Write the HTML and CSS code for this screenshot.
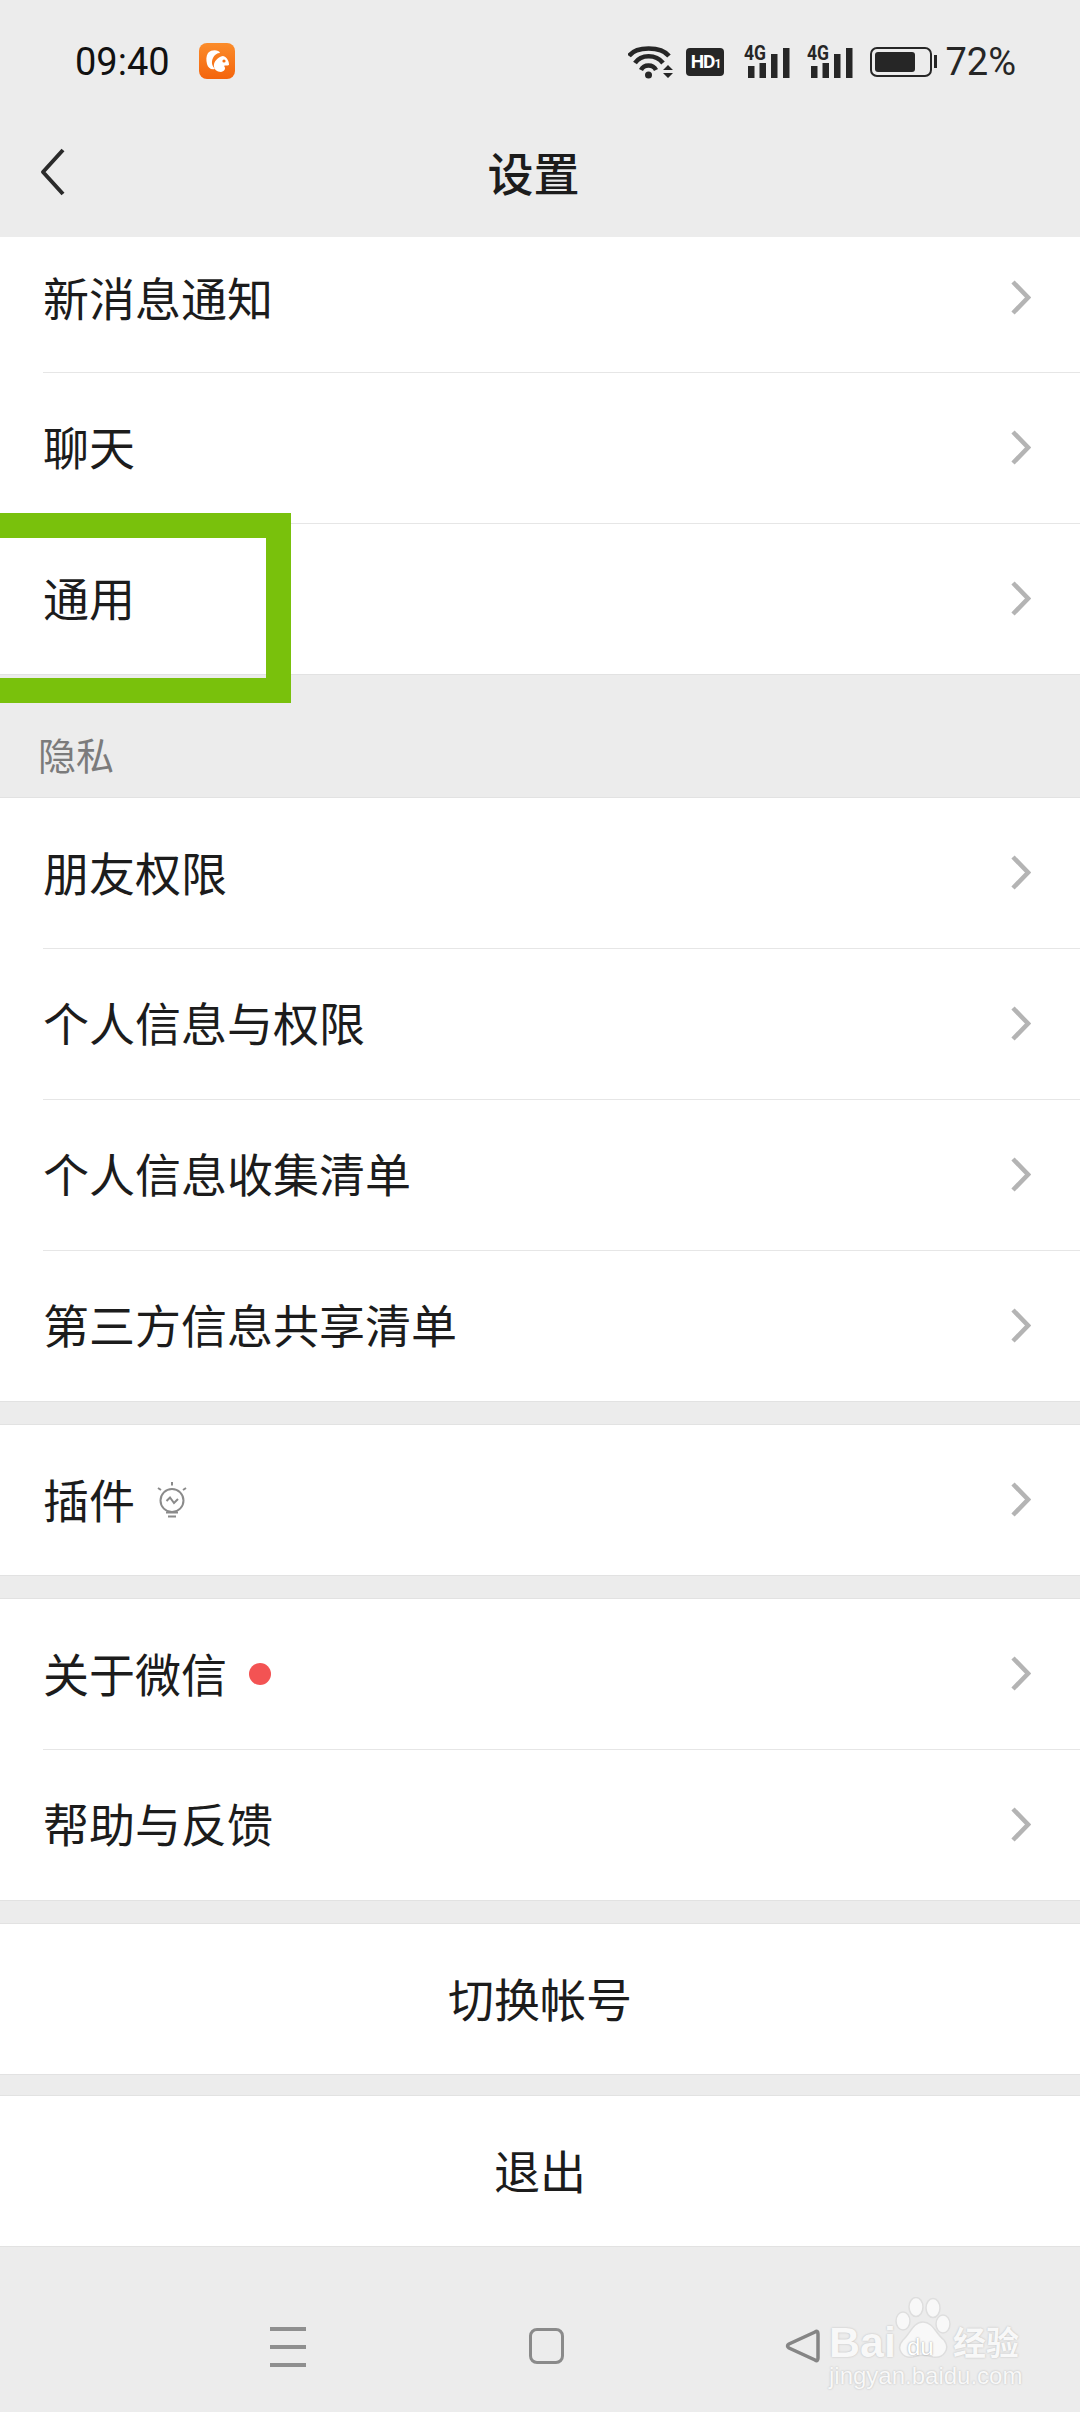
FILE: index.html
```html
<!DOCTYPE html>
<html>
  <head>
    <meta charset="utf-8">
    <title>设置</title>
    <link rel="stylesheet" href="styles.css">
  </head>
  <body>
    <svg class="sprites" width="0" height="0">
      <symbol id="chevron" viewBox="0 0 20 36">
        <path d="M2 2 L17 17.500 L2 33" fill="none" stroke="#b4b4b4" stroke-width="4.500"/>
      </symbol>
    </svg>

    <header class="status">
      <span class="clock">09:40</span>
      <svg class="uc-icon" width="36" height="36" viewBox="0 0 36 36">
        <defs>
          <linearGradient id="ucfill" x1="0" y1="0" x2="0" y2="1">
            <stop offset="0" stop-color="#fb8c2a"/>
            <stop offset="1" stop-color="#f4640c"/>
          </linearGradient>
        </defs>
        <rect width="36" height="36" rx="8" fill="url(#ucfill)"/>
        <path d="M9 10 C13 6 20 7 21 10 C18 10 15 12 14 15 C12 19 13 23 16 26 C12 27 9 25 8 21 C7 17 7 13 9 10 Z" fill="#fff"/>
        <path d="M15 21 C16 17 21 13 24 13 C28 14 30 18 30 22 C28 23 26 22 25 23 C27 25 26 28 22 29 C18 29 14 26 15 21 Z" fill="#fff"/>
        <circle cx="25" cy="18" r="1.600" fill="#f4700f"/>
      </svg>
      <div class="status-right">
        <svg class="wifi" width="46" height="34" viewBox="0 0 46 34">
          <g fill="none" stroke="#262626" stroke-width="4.500">
            <path d="M1 11 C8 1 33 1 41 11"/>
            <path d="M7 18 C13 9 28 9 35 18"/>
            <path d="M13 25 C16 19 25 19 28 25"/>
          </g>
          <circle cx="20.500" cy="30" r="3.500" fill="#262626"/>
          <path d="M35 25 L40 20 L45 25 Z M35 28 L45 28 L40 33 Z" fill="#262626"/>
        </svg>
        <span class="hd">HD<small>1</small></span>
        <svg class="signal" width="46" height="38" viewBox="0 -5 46 38">
          <text x="0" y="14" class="sig-text" textLength="22" lengthAdjust="spacingAndGlyphs">4G</text>
          <rect x="4" y="20" width="6.500" height="12"/>
          <rect x="15.500" y="17" width="6.500" height="15"/>
          <rect x="27" y="8" width="6.500" height="24"/>
          <rect x="39" y="2" width="6.500" height="30"/>
        </svg>
        <svg class="signal" width="46" height="38" viewBox="0 -5 46 38">
          <text x="0" y="14" class="sig-text" textLength="22" lengthAdjust="spacingAndGlyphs">4G</text>
          <rect x="4" y="20" width="6.500" height="12"/>
          <rect x="15.500" y="17" width="6.500" height="15"/>
          <rect x="27" y="8" width="6.500" height="24"/>
          <rect x="39" y="2" width="6.500" height="30"/>
        </svg>
        <span class="battery"><span class="battery-fill"></span></span>
        <span class="percent">72%</span>
      </div>
    </header>

    <nav class="navbar">
      <svg class="back" width="28" height="48" viewBox="0 0 28 48">
        <path d="M24 2 L4 24 L24 46" fill="none" stroke="#2a2a2a" stroke-width="4" stroke-linejoin="round"/>
      </svg>
      <h1>设置</h1>
    </nav>

    <section class="group">
      <div class="row first"><span>新消息通知</span><svg class="chev"><use href="#chevron"/></svg></div>
      <div class="row"><span>聊天</span><svg class="chev"><use href="#chevron"/></svg></div>
      <div class="row"><span>通用</span><svg class="chev"><use href="#chevron"/></svg></div>
    </section>

    <div class="caption">隐私</div>

    <section class="group">
      <div class="row"><span>朋友权限</span><svg class="chev"><use href="#chevron"/></svg></div>
      <div class="row"><span>个人信息与权限</span><svg class="chev"><use href="#chevron"/></svg></div>
      <div class="row"><span>个人信息收集清单</span><svg class="chev"><use href="#chevron"/></svg></div>
      <div class="row"><span>第三方信息共享清单</span><svg class="chev"><use href="#chevron"/></svg></div>
    </section>

    <section class="group spaced">
      <div class="row">
        <span>插件</span>
        <svg class="bulb" width="30" height="36" viewBox="0 0 30 36">
          <g fill="none" stroke="#8a8a8a" stroke-width="2">
            <circle cx="15" cy="18.500" r="11.500"/>
            <path d="M9.500 19 L13 15.500 L17 21 L21 17"/>
            <path d="M15 0 L15 3.500 M1 6 L4 8 M29 6 L26 8"/>
            <path d="M9 30.500 L21 30.500 M11 34.500 L19 34.500"/>
          </g>
        </svg>
        <svg class="chev"><use href="#chevron"/></svg>
      </div>
    </section>

    <section class="group spaced">
      <div class="row"><span>关于微信</span><i class="dot"></i><svg class="chev"><use href="#chevron"/></svg></div>
      <div class="row"><span>帮助与反馈</span><svg class="chev"><use href="#chevron"/></svg></div>
    </section>

    <section class="group spaced"><div class="row center"><span>切换帐号</span></div></section>
    <section class="group spaced tight"><div class="row center"><span>退出</span></div></section>

    <footer class="sysnav">
      <span class="menu-btn"><i></i><i></i><i></i></span>
      <span class="home-btn"></span>
      <svg class="back-btn" width="36" height="36" viewBox="0 0 36 36">
        <path d="M30 4 Q33 2 33 6 L33 30 Q33 34 30 32 L4 20 Q1 18 4 16 Z" fill="none" stroke="#858585" stroke-width="3.500"/>
      </svg>
    </footer>

    <!-- annotation + watermark sit on top of the screenshot -->
    <div class="highlight"></div>
    <div class="watermark">
      <svg class="paw" width="56" height="62" viewBox="0 0 56 62">
        <g fill="#f8f8f8" stroke="#dedede" stroke-width="1.500">
          <ellipse cx="21" cy="10" rx="7" ry="9.500"/>
          <ellipse cx="38" cy="11" rx="7" ry="9.500"/>
          <ellipse cx="8" cy="24" rx="7" ry="9"/>
          <ellipse cx="48" cy="27" rx="7" ry="9"/>
          <path d="M28 25 C38 25 41 37 49 43 C56 52 48 62 38 60 C32 58 24 58 18 60 C8 62 0 52 8 43 C15 37 18 25 28 25 Z"/>
        </g>
      </svg>
      <span class="wm-brand">Bai</span>
      <span class="wm-du">du</span>
      <span class="wm-cn">经验</span>
      <span class="wm-url">jingyan.baidu.com</span>
    </div>
  </body>
</html>
```

FILE: styles.css
```css
* {
  margin: 0;
  padding: 0;
  box-sizing: border-box;
}
body {
  width: 1080px;
  height: 2412px;
  overflow: hidden;
  position: relative;
  background-color: #ececec;
  color: #1c1c1c;
  font-family: "Noto Sans CJK SC", "Noto Sans", sans-serif;
  font-size: 46px;
}
.sprites {
  position: absolute;
}
.sig-text {
  font-family: "Roboto", sans-serif;
  font-size: 20px;
  font-weight: 700;
  fill: #262626;
}

/* status bar */
.status {
  height: 124px;
  display: flex;
  align-items: center;
  padding-left: 75px;
  padding-right: 64px;
}
.clock {
  font-family: "Roboto", sans-serif;
  font-size: 38px;
  color: #111;
  width: 124px;
}
.uc-icon {
  margin-top: -2px;
}
.status-right {
  margin-left: auto;
  display: flex;
  align-items: center;
  gap: 17px;
}
.wifi {
  margin-right: -5px;
}
.signal {
  fill: #262626;
  margin-top: -5px;
}
.hd {
  width: 38px;
  height: 28px;
  border-radius: 4px;
  background-color: #262626;
  color: #fff;
  font-family: "Roboto", sans-serif;
  font-weight: 700;
  font-size: 19px;
  line-height: 28px;
  text-align: center;
  letter-spacing: -1px;
  margin-right: 3px;
}
.hd small {
  font-size: 12px;
}
.battery {
  display: block;
  position: relative;
  width: 62px;
  height: 30px;
  border: 2.500px solid #262626;
  border-radius: 7px;
  padding: 3px;
  margin-right: 2px;
}
.battery::after {
  content: "";
  position: absolute;
  right: -7px;
  top: 6px;
  width: 3px;
  height: 13px;
  background-color: #262626;
}
.battery-fill {
  display: block;
  width: 40px;
  height: 100%;
  border-radius: 3px;
  background-color: #262626;
}
.percent {
  font-family: "Roboto", sans-serif;
  font-size: 38px;
  color: #262626;
  margin-left: -6px;
}

/* title */
.navbar {
  height: 113px;
  position: relative;
  display: flex;
  align-items: center;
  justify-content: center;
  padding-bottom: 19px;
}
.navbar h1 {
  font-size: 46px;
  font-weight: 500;
  margin-left: -13px;
}
.back {
  position: absolute;
  left: 39px;
  top: 24px;
}

/* list */
.group {
  background-color: #fff;
  border-bottom: 1px solid #e2e2e2;
}
.group.spaced {
  margin-top: 22px;
  border-top: 1px solid #e2e2e2;
}
.group.spaced.tight {
  margin-top: 20px;
}
.row {
  height: 151px;
  display: flex;
  align-items: center;
  padding-left: 43px;
  position: relative;
}
.row > span {
  padding-bottom: 5px;
}
.row + .row::before {
  content: "";
  position: absolute;
  left: 43px;
  right: 0;
  top: 0;
  height: 1px;
  background-color: #e6e6e6;
}
.row.first {
  height: 135px;
  padding-bottom: 13px;
}
.group.spaced .row:first-child,
.caption + .group .row:first-child {
  height: 150px;
}
.row.center {
  justify-content: center;
  padding-left: 0;
}
.chev {
  width: 20px;
  height: 36px;
  margin-left: auto;
  margin-right: 49px;
}
.bulb {
  margin-left: 22px;
}
.dot {
  width: 22px;
  height: 22px;
  border-radius: 50%;
  margin-left: 22px;
  background-color: #f35353;
}
.caption {
  height: 123px;
  padding-left: 38px;
  padding-top: 52px;
  font-size: 38px;
  line-height: 54px;
  color: #7b7b7b;
  border-bottom: 1px solid #e2e2e2;
}

/* system buttons */
.sysnav {
  height: 166px;
  position: relative;
}
.menu-btn {
  position: absolute;
  left: 270px;
  top: 80px;
  width: 36px;
  display: flex;
  flex-direction: column;
  gap: 14px;
}
.menu-btn i {
  height: 4px;
  background-color: #8f8f8f;
}
.home-btn {
  position: absolute;
  left: 529px;
  top: 81px;
  width: 35px;
  height: 36px;
  border: 3px solid #8a8a8a;
  border-radius: 8px;
}
.back-btn {
  position: absolute;
  left: 785px;
  top: 81px;
}

/* overlays */
.highlight {
  position: absolute;
  left: -25px;
  top: 513px;
  width: 316px;
  height: 190px;
  border: 25px solid #79c10c;
}
.watermark {
  position: absolute;
  left: 829px;
  top: 2297px;
  width: 192px;
  height: 92px;
  color: #f8f8f8;
  text-shadow: 0 0 2px #b5b5b5;
  font-family: "Liberation Sans", sans-serif;
}
.paw {
  position: absolute;
  left: 66px;
  top: 0;
}
.wm-brand {
  position: absolute;
  left: 0;
  top: 20px;
  font-size: 43px;
  line-height: 50px;
  font-weight: 700;
}
.wm-du {
  position: absolute;
  left: 78px;
  top: 36px;
  font-size: 24px;
  line-height: 28px;
  color: #fff;
  text-shadow: 0 0 2px #8c8c8c;
}
.wm-cn {
  position: absolute;
  left: 124px;
  top: 26px;
  font-family: "Noto Sans CJK SC", sans-serif;
  font-size: 33px;
  line-height: 36px;
  font-weight: 700;
}
.wm-url {
  position: absolute;
  left: 0;
  top: 65px;
  font-size: 24px;
  line-height: 28px;
  white-space: nowrap;
}
```
